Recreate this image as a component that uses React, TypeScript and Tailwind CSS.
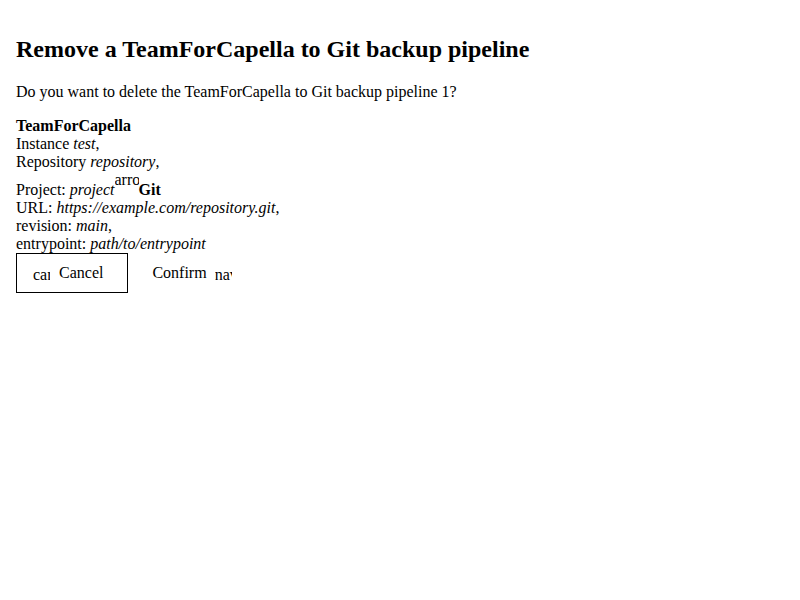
import React from "react";

// icon font isn't loaded, so the ligature names show as clipped text
function Icon({ name, size }: { name: string; size: "sm" | "md" }) {
  return (
    <span
      className={
        size === "sm"
          ? "inline-block w-[17px] h-[18px] overflow-hidden whitespace-nowrap shrink-0 pt-[2px]"
          : "inline-block w-6 h-6 overflow-hidden whitespace-nowrap"
      }
    >
      {name}
    </span>
  );
}

export default function App() {
  return (
    <div className="px-4 pt-[11px] pb-4 min-h-screen bg-white text-black text-base leading-[normal] font-['Liberation_Serif',serif]">
      <h2 className="text-2xl font-bold mt-[22px] mb-[18px]">Remove a TeamForCapella to Git backup pipeline</h2>
      <p className="my-4">Do you want to delete the TeamForCapella to Git backup pipeline 1?</p>

      <div>
        <div className="font-bold">TeamForCapella</div>
        <div>
          Instance <i>test</i>,
        </div>
        <div>
          Repository <i>repository</i>,
        </div>
        <div>
          Project: <i>project</i>
          <Icon name="arrow_forward" size="md" />
          <b>Git</b>
        </div>
        <div>
          URL: <i>https://example.com/repository.git</i>,
        </div>
        <div>
          revision: <i>main</i>,
        </div>
        <div>
          entrypoint: <i>path/to/entrypoint</i>
        </div>
      </div>

      <div className="flex gap-2">
        <button className="flex items-center h-10 border border-black pl-4 pr-6 bg-transparent cursor-pointer">
          <Icon name="cancel" size="sm" />
          <span className="ml-[9px]">Cancel</span>
        </button>
        <button className="flex items-center h-10 pl-4 pr-6 bg-transparent cursor-pointer">
          <span>Confirm</span>
          <span className="ml-2 flex">
            <Icon name="navigate_next" size="sm" />
          </span>
        </button>
      </div>
    </div>
  );
}
